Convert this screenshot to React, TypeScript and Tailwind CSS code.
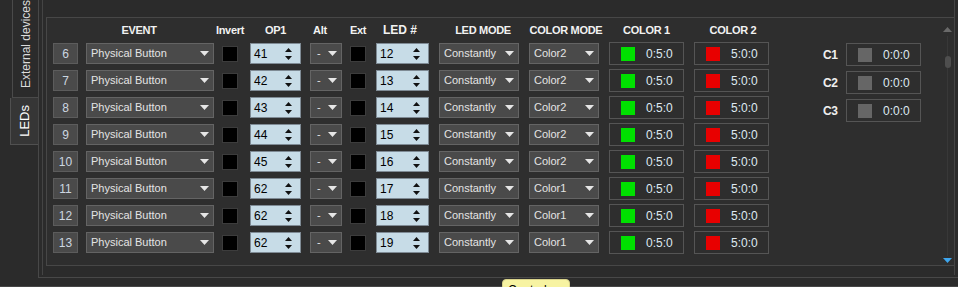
import React from "react";

const rows: [number, string, string, string][] = [
  [6, "41", "12", "Color2"],
  [7, "42", "13", "Color2"],
  [8, "43", "14", "Color2"],
  [9, "44", "15", "Color2"],
  [10, "45", "16", "Color2"],
  [11, "62", "17", "Color1"],
  [12, "62", "18", "Color1"],
  [13, "62", "19", "Color1"],
];

const Arrow = () => (
  <svg width="9" height="5" viewBox="0 0 9 5" className="shrink-0">
    <polygon points="0,0 9,0 4.5,5" fill="#e6e6e6" />
  </svg>
);

const Combo = ({ w, text, cls }: { w: string; text: string; cls?: string }) => (
  <div
    className={`${w} ${cls ?? ""} h-[21px] shrink-0 flex items-center justify-between pl-[4px] pr-[4px] bg-[#4a4a4a] border border-[#646464] text-[11px] text-[#e4e4e4] whitespace-nowrap overflow-hidden`}
  >
    <span>{text}</span>
    <Arrow />
  </div>
);

const Spin = ({ w, v, cls }: { w: string; v: string; cls?: string }) => (
  <div
    className={`${w} ${cls ?? ""} h-[21px] shrink-0 flex items-center justify-between pl-[3px] pr-[8px] bg-[#c7dce7] border border-[#7f8b95] text-[12px] text-black`}
  >
    <span>{v}</span>
    <svg width="7" height="12" viewBox="0 0 7 12">
      <polygon points="0,4 3.5,0 7,4" fill="#111" />
      <polygon points="0,8 7,8 3.5,12" fill="#111" />
    </svg>
  </div>
);

const Check = ({ cls }: { cls?: string }) => (
  <div className={`${cls ?? ""} w-[16px] h-[16px] shrink-0 bg-black border border-[#3c3c3c]`} />
);

const ColorBox = ({ color, text, cls }: { color: string; text: string; cls?: string }) => (
  <div
    className={`${cls ?? ""} w-[75px] h-[23px] shrink-0 flex items-center border border-[#555555] pl-[11px]`}
  >
    <div className="w-[14px] h-[14px] shrink-0" style={{ backgroundColor: color }} />
    <span className="ml-[11px] text-[12px] text-[#dfe9f2]">{text}</span>
  </div>
);

const H = ({ w, cls, children }: { w: string; cls?: string; children: React.ReactNode }) => (
  <div className={`${w} ${cls ?? ""} shrink-0 flex justify-center whitespace-nowrap`}>{children}</div>
);

export default function App() {
  return (
    <div
      className="w-[958px] h-[287px] bg-[#2b2b2b] overflow-hidden relative flex flex-col"
      style={{ fontFamily: '"Liberation Sans", Arial, sans-serif' }}
    >
      <div className="h-[286px] flex">
        {/* vertical tabs */}
        <div className="w-[38px] shrink-0 flex flex-col items-end">
          <div className="w-[26px] h-[98px] border-l border-b border-[#4a4a4a] bg-[#2b2b2b] flex flex-col justify-end items-center pb-[9px] overflow-hidden">
            <span className="[writing-mode:vertical-rl] rotate-180 text-[12px] text-[#dcdcdc] whitespace-nowrap leading-none">
              External devices
            </span>
          </div>
          <div className="w-[28px] h-[47px] border-l border-b border-[#505050] bg-[#363636] flex flex-col justify-center items-center">
            <span className="[writing-mode:vertical-rl] rotate-180 text-[13px] text-white whitespace-nowrap leading-none">
              LEDs
            </span>
          </div>
        </div>

        {/* tab pane */}
        <div className="flex-1 h-[278px] border-l border-b border-[#484848] pl-[3px]">
          <div className="h-[275px] border-l border-r border-[#444444] mr-[3px] pl-[3px] pt-[17px]">
            <div className="h-[249px] border-t border-l border-b border-[#474747] bg-[#2e2e2e] flex pl-[6px]">
              {/* table */}
              <div className="flex flex-col">
                <div className="h-[25px] flex items-center text-[11px] font-bold text-[#f2f2f2] tracking-[-0.3px]">
                  <H w="w-[25px]">{""}</H>
                  <H w="w-[128px]" cls="ml-[8px] pr-[22px]">EVENT</H>
                  <H w="w-[16px]" cls="ml-[8px]">Invert</H>
                  <H w="w-[51px]" cls="ml-[12px]">OP1</H>
                  <H w="w-[32px]" cls="ml-[9px] pr-[12px]">Alt</H>
                  <H w="w-[16px]" cls="ml-[8px]">Ext</H>
                  <H w="w-[53px]" cls="ml-[10px] pr-[5px]">
                    <span className="font-semibold text-[12px] tracking-normal -mt-[2px]">LED #</span>
                  </H>
                  <H w="w-[80px]" cls="ml-[10px] pl-[8px]">LED MODE</H>
                  <H w="w-[70px]" cls="ml-[10px] pl-[4px]">COLOR MODE</H>
                  <H w="w-[75px]" cls="ml-[10px]">COLOR 1</H>
                  <H w="w-[75px]" cls="ml-[10px] pl-[3px]">COLOR 2</H>
                </div>
                <div className="flex flex-col gap-[6px]">
                  {rows.map(([n, op, led, cm]) => (
                    <div key={n} className="h-[21px] flex items-center">
                      <div className="w-[25px] h-[21px] shrink-0 flex items-center justify-center bg-[#4a4a4a] border border-[#5c5c5c] text-[12px] text-[#cdd7e1]">
                        {n}
                      </div>
                      <Combo w="w-[128px]" cls="ml-[8px]" text="Physical Button" />
                      <Check cls="ml-[8px]" />
                      <Spin w="w-[51px]" cls="ml-[12px]" v={op} />
                      <Combo w="w-[32px]" cls="ml-[9px] pl-[6px]" text="-" />
                      <Check cls="ml-[8px]" />
                      <Spin w="w-[53px]" cls="ml-[10px]" v={led} />
                      <Combo w="w-[80px]" cls="ml-[10px]" text="Constantly" />
                      <Combo w="w-[70px]" cls="ml-[10px]" text={cm} />
                      <ColorBox cls="ml-[10px]" color="#00e000" text="0:5:0" />
                      <ColorBox cls="ml-[10px]" color="#e80000" text="5:0:0" />
                    </div>
                  ))}
                </div>
              </div>

              {/* C1..C3 */}
              <div className="ml-[54px] pt-[25px] flex flex-col gap-[5px]">
                {["C1", "C2", "C3"].map((c) => (
                  <div key={c} className="flex items-center h-[23px]">
                    <span className="w-[23px] text-[12px] font-bold text-[#eeeeee] tracking-[-0.3px]">{c}</span>
                    <ColorBox color="#666666" text="0:0:0" />
                  </div>
                ))}
              </div>

              {/* scrollbar */}
              <div className="ml-auto mr-[2px] w-[9px] flex flex-col items-center pt-[9px]">
                <svg width="9" height="5" viewBox="0 0 9 5">
                  <polygon points="0,5 4.5,0 9,5" fill="#6a6a6a" />
                </svg>
                <div className="relative w-[9px] h-[220px] mt-[4px] flex justify-center">
                  <div className="w-[1px] h-full bg-[#383838]" />
                  <div className="absolute top-[20px] w-[6px] h-[12px] rounded-[3px] bg-[#4e4e4e]" />
                </div>
                <svg width="9" height="5" viewBox="0 0 9 5" className="mt-[2px]">
                  <polygon points="0,0 9,0 4.5,5" fill="#3ea6ee" />
                </svg>
              </div>
            </div>
          </div>
        </div>
      </div>
      <div className="h-[1px] bg-[#464646]" />

      {/* tooltip (cut off at the window's bottom edge, as in the reference) */}
      <div className="absolute left-[502px] top-[279px] w-[68px] h-[22px] rounded-[4px] bg-[#f7f3a2] border border-[#d8d28a] pl-[5px] pt-[4px] text-[12px] text-black leading-none">
        Control Tab
      </div>
    </div>
  );
}
